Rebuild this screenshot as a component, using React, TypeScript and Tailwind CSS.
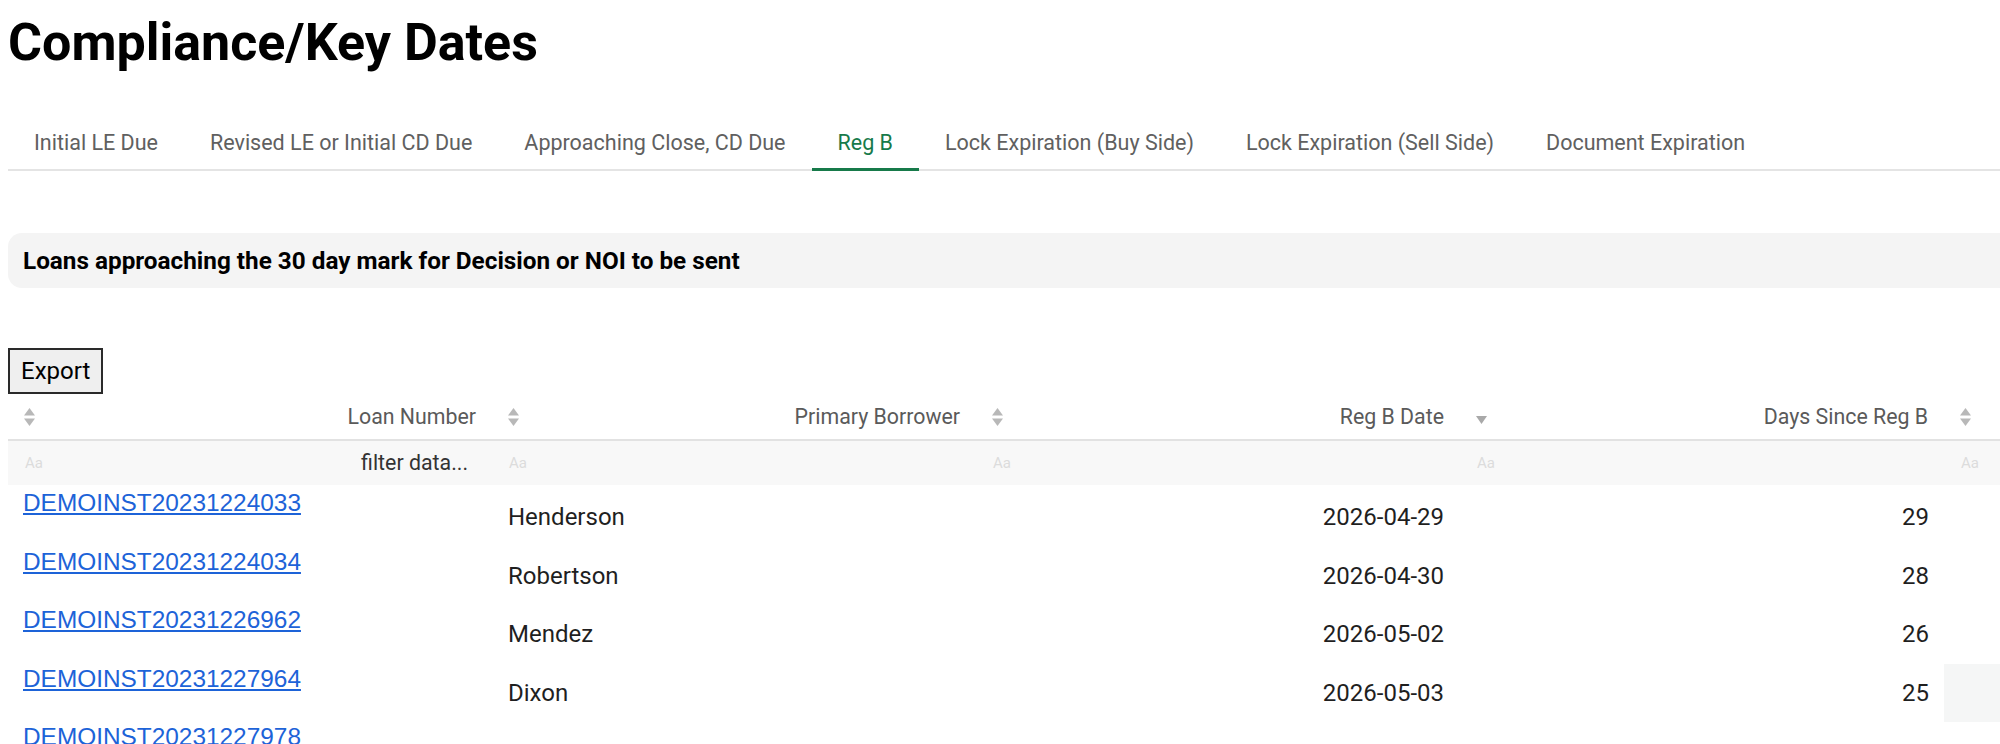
import React, { useState } from 'react';

type LoanRow = {
  loanNumber: string;
  borrower?: string;
  regBDate?: string;
  daysSince?: number;
};

const TABS = [
  'Initial LE Due',
  'Revised LE or Initial CD Due',
  'Approaching Close, CD Due',
  'Reg B',
  'Lock Expiration (Buy Side)',
  'Lock Expiration (Sell Side)',
  'Document Expiration',
];

const ROWS: LoanRow[] = [
  { loanNumber: 'DEMOINST20231224033', borrower: 'Henderson', regBDate: '2026-04-29', daysSince: 29 },
  { loanNumber: 'DEMOINST20231224034', borrower: 'Robertson', regBDate: '2026-04-30', daysSince: 28 },
  { loanNumber: 'DEMOINST20231226962', borrower: 'Mendez', regBDate: '2026-05-02', daysSince: 26 },
  { loanNumber: 'DEMOINST20231227964', borrower: 'Dixon', regBDate: '2026-05-03', daysSince: 25 },
  { loanNumber: 'DEMOINST20231227978' },
];

// up/down sorter arrows; 'desc' shows only the down arrow
const SortIcon: React.FC<{ dir?: 'desc' }> = ({ dir }) =>
  dir === 'desc' ? (
    <svg width="11" height="8" viewBox="0 0 11 8" className="relative top-[3px]">
      <path d="M0 0h11L5.5 8z" fill="#a9a9a9" />
    </svg>
  ) : (
    <svg width="11" height="18" viewBox="0 0 11 18">
      <path d="M0 7.5L5.5 0L11 7.5z" fill="#b8b8b8" />
      <path d="M0 10.5h11L5.5 18z" fill="#b8b8b8" />
    </svg>
  );

const COLS = 'grid grid-cols-[484px_484px_484px_484px_484px]';

const App: React.FC = () => {
  const [activeTab, setActiveTab] = useState('Reg B');

  return (
    <div className="h-[744px] w-full overflow-hidden bg-white font-['Roboto','Liberation_Sans',sans-serif] text-[#1f1f1f]">
      <div className="w-[2440px] pl-2">
        <h1 className="pt-[12px] text-[52px] font-bold leading-[62px] text-black">Compliance/Key Dates</h1>

        {/* Tabs */}
        <nav className="mt-[41px] flex border-b-2 border-[#e4e4e4]">
          {TABS.map((tab) => (
            <button
              key={tab}
              onClick={() => setActiveTab(tab)}
              className={`-mb-[2px] border-b-[3px] px-[26px] pt-[12px] pb-[9px] text-[21.5px] leading-[32px] ${
                activeTab === tab ? 'border-[#177a4a] text-[#177a4a]' : 'border-transparent text-[#606060]'
              }`}
            >
              {tab}
            </button>
          ))}
        </nav>

        {/* Section heading */}
        <div className="mt-[62px] flex h-[55px] items-center rounded-[14px] bg-[#f4f4f4] px-[15px]">
          <h3 className="text-[24.3px] font-bold leading-[28px] text-black">
            Loans approaching the 30 day mark for Decision or NOI to be sent
          </h3>
        </div>

        <button className="mt-[60px] h-[46px] border-2 border-[#2a2a2a] bg-[#efefef] px-[11px] text-[24px] leading-[28px] text-black">
          Export
        </button>

        {/* Table */}
        <div>
          <div className={`${COLS} h-[47px] border-b-2 border-[#e2e2e2] text-[21.33px] text-[#5a5a5a]`}>
            {[
              { title: 'Loan Number' },
              { title: 'Primary Borrower' },
              { title: 'Reg B Date' },
              { title: 'Days Since Reg B', sorted: true },
              { title: '' },
            ].map((col, i) => (
              <div key={i} className="flex items-center justify-between pl-4 pr-4">
                <SortIcon dir={col.sorted ? 'desc' : undefined} />
                <span>{col.title}</span>
              </div>
            ))}
          </div>

          <div className={`${COLS} h-[44px] bg-[#f8f8f8]`}>
            {[0, 1, 2, 3, 4].map((i) => (
              <div key={i} className="flex items-center justify-between pl-[17px] pr-6">
                <span className="text-[15px] text-[#dcdcdc]">Aa</span>
                {i === 0 && <span className="text-[21.33px] text-[#333]">filter data...</span>}
              </div>
            ))}
          </div>

          <div className="mt-[3px]">
            {ROWS.map((row, idx) => (
              <div key={row.loanNumber} className={`${COLS} h-[58.6px] text-[24px]`}>
                <div className="-mt-[3px] pl-[15px]">
                  <a href="#" className="font-['Liberation_Sans',Arial,sans-serif] text-[24.4px] leading-[28px] text-[#1d63d8] underline">
                    {row.loanNumber}
                  </a>
                </div>
                <div className="flex items-center pl-4">{row.borrower}</div>
                <div className="flex items-center justify-end pr-4">{row.regBDate}</div>
                <div className="flex items-center justify-end pr-[15px]">{row.daysSince}</div>
                <div className={idx === 3 ? 'bg-[#f5f6f6]' : ''} />
              </div>
            ))}
          </div>
        </div>
      </div>
    </div>
  );
};

export default App;
